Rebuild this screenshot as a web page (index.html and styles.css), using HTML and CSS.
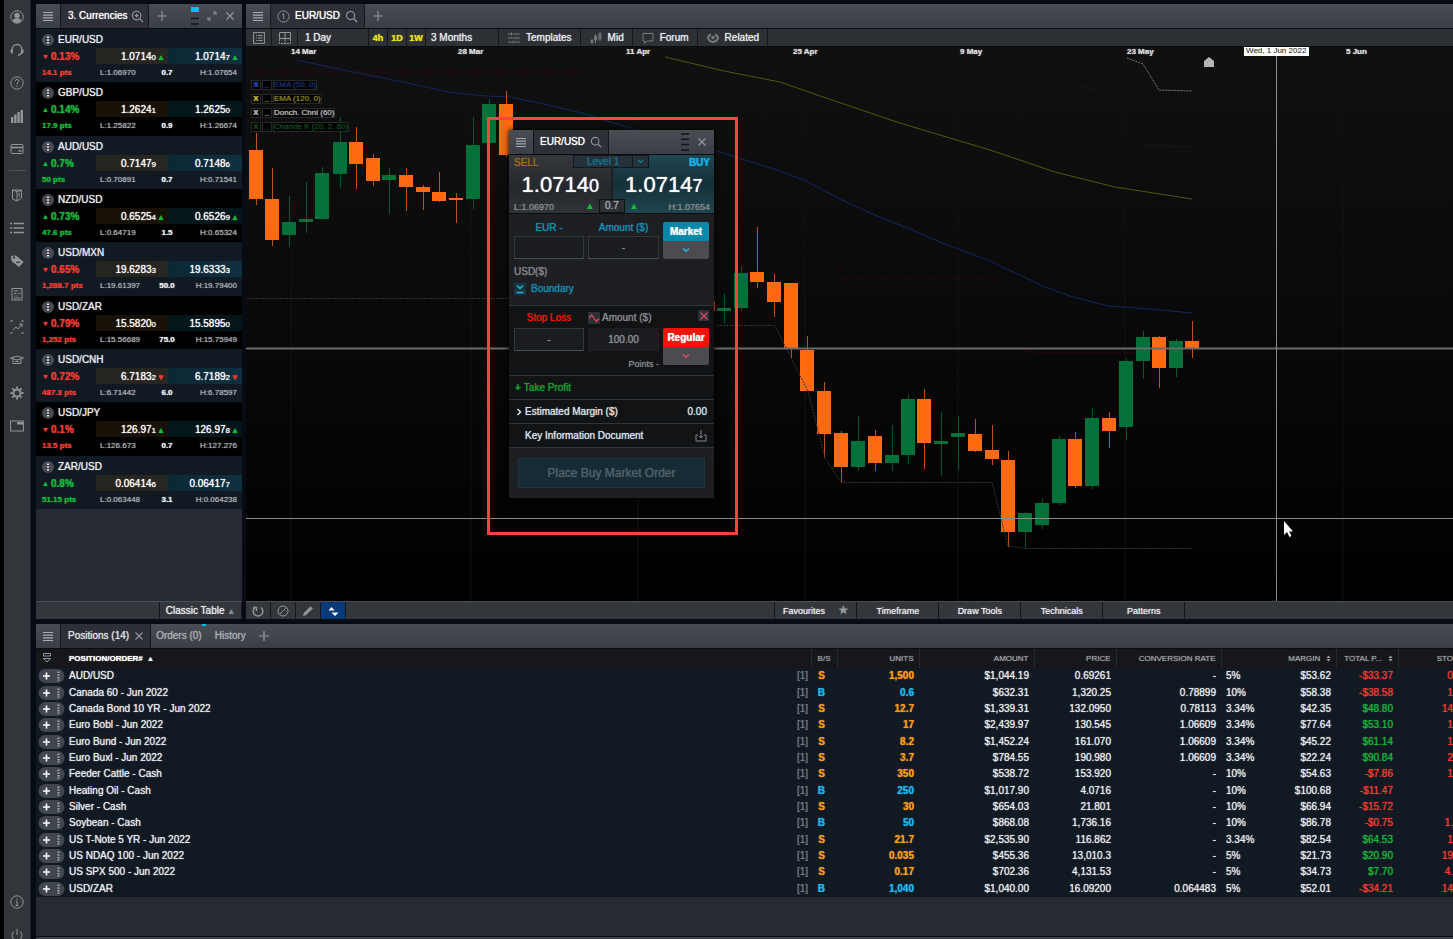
FILE: index.html
```html
<!DOCTYPE html>
<html lang="en">
<head>
  <meta charset="UTF-8" />
  <meta name="viewport" content="width=device-width, initial-scale=1" />
  <title>Trading platform</title>
  <link rel="stylesheet" href="styles.css">
</head>
<body>
  <svg class="defs" aria-hidden="true">
    <symbol id="i-menu" viewBox="0 0 10 10"><path d="M0 1.5h10M0 4.2h10M0 6.9h10M0 9.5h10" stroke="currentColor" stroke-width="1.2"/></symbol>
    <symbol id="i-plus" viewBox="0 0 10 10"><path d="M5 0v10M0 5h10" stroke="currentColor" stroke-width="1.2"/></symbol>
    <symbol id="i-close" viewBox="0 0 10 10"><path d="M1.5 1.5l7 7M8.5 1.5l-7 7" stroke="currentColor" stroke-width="1.2"/></symbol>
    <symbol id="i-search" viewBox="0 0 14 14"><circle cx="6" cy="6" r="4.4" fill="none" stroke="currentColor" stroke-width="1.2"/><path d="M9.2 9.2l3.8 3.8" stroke="currentColor" stroke-width="1.5"/></symbol>
    <symbol id="i-searchplus" viewBox="0 0 14 14"><circle cx="6" cy="6" r="4.6" fill="none" stroke="currentColor" stroke-width="1.2"/><path d="M9.2 9.2l3.8 3.8M6 3.8v4.4M3.8 6h4.4" stroke="currentColor" stroke-width="1.3"/></symbol>
    <symbol id="i-chev" viewBox="0 0 8 6"><path d="M1 1.5l3 2.6 3-2.6" fill="none" stroke="currentColor" stroke-width="1.6"/></symbol>
    <symbol id="i-dots" viewBox="0 0 12 12"><circle cx="6" cy="6" r="6" fill="#484c52"/><path d="M5 2.5h2v1.6H5zM5 5.2h2v1.6H5zM5 7.9h2v1.6H5z" fill="#d8dadc"/></symbol>
    <symbol id="i-pill" viewBox="0 0 26 14"><rect width="26" height="14" rx="7" fill="#41464e"/><path d="M8 3.5v7M4.5 7h7" stroke="#fff" stroke-width="1.6"/><path d="M19 2.5h2v1.6h-2zM19 5.2h2v1.6h-2zM19 7.9h2v1.6h-2zM19 10.4h2v1.4h-2z" fill="#a9adb3"/></symbol>
    <symbol id="i-sort" viewBox="0 0 6 8"><path d="M.5 3.5L3 .5l2.5 3zM.5 4.5h5L3 7.5z" fill="currentColor"/></symbol>
  </svg>

  <nav class="sidebar" aria-label="Main">
    <button aria-label="Account"><svg viewBox="0 0 14 14"><circle cx="7" cy="7" r="6.2" class="ln"/><circle cx="7" cy="5.4" r="2.7" class="fl"/><path class="fl" d="M2.5 10.5q1-2 3-2.3h3q2 .3 3 2.3Q9.8 13 7 13t-4.5-2.5z"/></svg></button>
    <button aria-label="Support"><svg viewBox="0 0 14 14"><path class="ln" stroke-width="1.4" d="M2.2 7.5V6.3a4.8 4.8 0 0 1 9.6 0v1.2q0 4-3.8 4.7"/><path class="fl" d="M.5 6.5h2.3v4H1.5L.5 9.5zM11.2 6.5h2.3v3l-1 1h-1.3z"/></svg></button>
    <button aria-label="Help"><svg viewBox="0 0 14 14"><circle cx="7" cy="7" r="6.2" class="ln"/><path class="ln" d="M5 5.3q.2-1.8 2-1.8t2 1.6Q9 6.2 7 7.2v1.3M7 9.7v1.2"/></svg></button>
    <button aria-label="Statistics"><svg viewBox="0 0 14 14"><path class="fl" d="M1 8h2.4v6H1zM4.2 5.5h2.4V14H4.200zM7.400 3h2.400v11H7.400zM10.600 1H13v13h-2.400z"/></svg></button>
    <button aria-label="Payments"><svg viewBox="0 0 14 14"><rect x="1" y="2.5" width="12" height="9" rx="1" class="ln"/><path class="ln" stroke-width="1.4" d="M1 5.500h12M8.500 9h3"/></svg></button>
    <hr>
    <button aria-label="Products"><svg viewBox="0 0 14 14"><path class="ln" d="M2.5 2l4.500 1.500V13L2.500 11zM2.500 2h9v8L7 13M7 3.500l4.500-1M9.200 5v4"/></svg></button>
    <button aria-label="Watchlists"><svg viewBox="0 0 14 14"><path class="ln" stroke-width="1.3" d="M0 2.500h2M3.500 2.500H14M0 7h2M3.500 7H14M0 11.500h2M3.500 11.500H14"/></svg></button>
    <button aria-label="Offers"><svg viewBox="0 0 14 14"><path class="fl" fill-rule="evenodd" d="M1 2l5-.5 7.500 6.500-4.500 5L1.500 7zM3 3a1 1 0 1 0 2 1 1 1 0 1 0-2-1zM6.500 7l1 1 2.700-.5-.4 1.200-2.600.6-1.200-1.200z"/></svg></button>
    <button aria-label="News"><svg viewBox="0 0 14 14"><rect x="2" y="1.5" width="10" height="11.5" class="ln"/><path class="ln" d="M4 4h4M9.500 4h1M4 6.500h2.500M8 6.500h2.500M4 9h1M6.500 9h1.500M4 11h6.500"/></svg></button>
    <button aria-label="Analysis"><svg viewBox="0 0 14 14"><path class="ln" d="M3 10l3-3 2 2 4-5M9 4h3v3"/><path class="ln" stroke-dasharray="3 8" d="M0 1h14M0 13h14"/></svg></button>
    <button aria-label="Education"><svg viewBox="0 0 14 14"><path class="ln" d="M.5 5L7 3l6.500 2L7 7zM3 6v4.500h8V6M5 8.500h4"/></svg></button>
    <button aria-label="Settings"><svg viewBox="0 0 14 14"><circle cx="7" cy="7" r="3.6" class="ln" stroke-width="2"/><path class="ln" stroke-width="2" d="M7 .5v2M7 11.500v2M.5 7h2M11.500 7h2M2.400 2.400l1.400 1.400M10.200 10.200l1.400 1.400M11.600 2.400l-1.400 1.400M3.800 10.200l-1.400 1.400"/></svg></button>
    <button aria-label="Layouts"><svg viewBox="0 0 14 14"><rect x=".6" y="2" width="12.800" height="10" class="ln"/><path class="fl" d="M7 3h6v2.500H7z"/></svg></button>
    <span class="spacer"></span>
    <button aria-label="Information"><svg viewBox="0 0 14 14"><circle cx="7" cy="7" r="6.2" class="ln"/><path class="ln" d="M7 3.500V5M5.800 6.500H7v4M5.500 10.500h3"/></svg></button>
    <button aria-label="Log out"><svg viewBox="0 0 14 14"><path class="ln" d="M4 3.500a5 5 0 1 0 6 0M7 1v6"/></svg></button>
  </nav>

  <main class="workspace">
    <div class="top-row">
      <section class="watchlist" aria-label="Currencies">
        <header class="bar">
          <button class="menu" aria-label="Menu"><svg><use href="#i-menu"/></svg></button>
          <div class="tab">3. Currencies <svg class="big"><use href="#i-searchplus"/></svg></div>
          <button class="add" aria-label="Add tab"><svg><use href="#i-plus"/></svg></button>
          <div class="window-tools">
            <svg class="stack" viewBox="0 0 8 18"><path d="M0 0h8v5H0z" fill="#00bfff"/><path d="M0 11.500h8M0 17h8" stroke="#111418" stroke-width="1.500"/></svg>
            <button aria-label="Expand"><svg viewBox="0 0 10 10"><path class="ln" d="M6 4l3-3M6 1h3v3M4 6L1 9M1 6v3h3"/></svg></button>
            <button aria-label="Close"><svg><use href="#i-close"/></svg></button>
          </div>
        </header>
        <div class="quotes" id="quotes"></div>
        <footer class="foot"><button class="classic">Classic Table <span>▲</span></button></footer>
      </section>

      <section class="chart" aria-label="EUR/USD chart">
        <header class="bar">
          <button class="menu" aria-label="Menu"><svg><use href="#i-menu"/></svg></button>
          <div class="tab"><svg class="big" viewBox="0 0 14 14"><circle cx="7" cy="7" r="6" class="ln"/><path class="ln" d="M5.500 5L7.200 4v6"/></svg> EUR/USD <svg class="big"><use href="#i-search"/></svg></div>
          <button class="add" aria-label="Add tab"><svg><use href="#i-plus"/></svg></button>
        </header>
        <div class="toolbar">
          <button class="sq" aria-label="Chart list"><svg viewBox="0 0 12 12"><rect x=".6" y=".6" width="10.800" height="10.800" class="ln"/><path class="ln" d="M3 3.500h1M5 3.500h4.500M3 6h1M5 6h4.500M3 8.500h1M5 8.500h4.500"/></svg></button>
          <button class="sq" aria-label="Grid"><svg viewBox="0 0 12 12"><path class="ln" d="M1 .5h10.500v6H.5v-6M6 .5v6"/><path class="ln" stroke-dasharray="2 1" d="M.5 7v4.500h11V7M6 7v4"/></svg></button>
          <button class="interval">1 Day</button>
          <button class="fav">4h</button>
          <button class="fav">1D</button>
          <button class="fav">1W</button>
          <button class="range">3 Months</button>
          <button class="tool"><svg viewBox="0 0 12 12"><path class="ln" d="M0 2h3M4.500 2H12M0 6h7M9 6h3M0 10h4M6 10h6M3.500 .5v3M8 4.500v3M5 8.500v3"/></svg>Templates</button>
          <button class="tool"><svg viewBox="0 0 12 12"><path class="ln" d="M2 7v5M1 8.500h2v2H1zM5.500 2v9M4.700 4h2v4h-2zM10 0v9M9 2h2v5H9z"/></svg>Mid</button>
          <button class="tool"><svg viewBox="0 0 12 12"><path class="ln" d="M1 1.500h10V9H5l-2.500 2.500V9H1z"/></svg>Forum</button>
          <button class="tool"><svg viewBox="0 0 12 12"><path class="ln" stroke-width="2" d="M4 2.500Q1 4 1 6q1 3.500 5 4 4-.5 5-4 0-2-3-3.500"/><circle cx="6" cy="5.500" r="1.800" class="fl"/></svg>Related</button>
        </div>

        <div class="plot">
          <svg class="plot-svg" viewBox="246 47 1207 554" preserveAspectRatio="xMinYMin slice" role="img" aria-label="Daily candles">
            <g stroke="#131313"><path d="M291 60V601M471 60V601M638 60V601M805 60V601M958 60V601M1125 60V601M1343 60V601"/></g>
            <g class="dates">
              <text x="291" y="54">14 Mar</text>
              <text x="458" y="54">28 Mar</text>
              <text x="626" y="54">11 Apr</text>
              <text x="793" y="54">25 Apr</text>
              <text x="960" y="54">9 May</text>
              <text x="1127" y="54">23 May</text>
              <text x="1346" y="54">5 Jun</text>
            </g>
            <g fill="none">
              <path stroke="#3a0a0a" stroke-dasharray="2 1" d="M250 72H590M835 261l6 17H1000M1022 349l18 4H1192"/>
              <path stroke="#0c2a10" stroke-dasharray="2 2" d="M1055 77l20 8 20 5 7 20M1140 145l52 2"/>
              <path stroke="#15265f" d="M297 60L338 69 383 78 417 85 448 92 486 96 510 97 548 105 582 113 627 127 714 150 780 171 806 181 842 200 875 215 910 229 942 243 990 261 1045 287 1070 296 1108 306 1150 309 1192 313"/>
              <path stroke="#55550c" d="M665 57L724 71 780 82 823 97 900 123 990 150 1055 172 1115 187 1192 199"/>
              <path stroke="#777" stroke-dasharray="2 1" d="M1127 58L1143 64 1159 90 1192 91"/>
            </g>
            <g id="candles"></g>
            <path class="channel" d="M247 298.500H509M717 325.500H775L791 358 808 391 825 458 841 482.500H992L1008 546 1025 548.500H1192"/>
            <path d="M1204 67v-6l5-4 5 4v6z" fill="#b5b5b5"/>
            <path d="M246 348.500H1453" stroke="#6a6a6a" stroke-width="2"/>
            <path d="M246 518.500H1453M1276.500 56V601" stroke="#8a8a8a"/>
            <rect x="1244" y="47" width="65" height="9" fill="#fff"/>
            <text x="1246" y="53" class="cross-date">Wed, 1 Jun 2022</text>
            <path d="M1284 521v14l3-3 2.500 5 2-1-2.300-4.500h3.800z" fill="#fff"/>
          </svg>

          <ul class="legend">
            <li class="blue"><b>X</b><b>_</b><span>EMA (50, 0)</span></li>
            <li class="yellow"><b>X</b><b>_</b><span>EMA (120, 0)</span></li>
            <li class="white"><b>X</b><b>_</b><span>Donch. Chnl (60)</span></li>
            <li class="green"><b>X</b><b>_</b><span>Chande K (20, 2, 60)</span></li>
          </ul>

          <div class="highlight">
            <form class="ticket" aria-label="Order ticket">
              <header class="bar">
                <button type="button" class="menu" aria-label="Menu"><svg><use href="#i-menu"/></svg></button>
                <div class="tab">EUR/USD <svg class="big"><use href="#i-search"/></svg></div>
                <div class="window-tools">
                  <svg class="stack" viewBox="0 0 8 18"><path d="M0 1h8M0 6.300h8M0 11.600h8M0 17h8" stroke="#111418" stroke-width="1.500"/></svg>
                  <button type="button" aria-label="Close"><svg><use href="#i-close"/></svg></button>
                </div>
              </header>
              <div class="prices">
                <button type="button" class="side sell"><span class="dir">SELL</span><span class="quote">1.0714<small>0</small></span><span class="hl">L:1.06970</span></button>
                <button type="button" class="side buy"><span class="dir">BUY</span><span class="quote">1.0714<small>7</small></span><span class="hl">H:1.07654</span></button>
                <label class="level"><select aria-label="Level"><option>Level 1</option></select><svg><use href="#i-chev"/></svg></label>
                <div class="spread"><i>▲</i><span>0.7</span><i>▲</i></div>
              </div>
              <div class="fields entry">
                <label for="eur">EUR -</label>
                <label for="amount">Amount ($)</label>
                <button type="button" class="type">Market</button>
                <input id="eur" type="text">
                <input id="amount" type="text" value="-">
                <button type="button" class="drop" aria-label="Order type"><svg><use href="#i-chev"/></svg></button>
                <span class="ccy">USD($)</span>
                <button type="button" class="boundary"><svg viewBox="0 0 12 12"><rect width="12" height="12" rx="1" fill="#183640"/><path d="M3 2.500l3 3 3-3M2.500 9.500h7" fill="none" stroke="#23b5dc" stroke-width="1.500"/></svg>Boundary</button>
              </div>
              <div class="fields stop">
                <label for="stop">Stop Loss</label>
                <label for="risk" class="risk"><svg viewBox="0 0 12 12"><rect width="12" height="12" fill="#2d3035"/><path d="M1 6l2.500-3L6 6M6 6.500l2.500 3L11 6.500" fill="none" stroke="#d04a60" stroke-width="1.300"/></svg>Amount ($)</label>
                <button type="button" class="remove" aria-label="Remove stop loss"><svg><use href="#i-close"/></svg></button>
                <input id="stop" type="text" value="-">
                <input id="risk" class="plain" type="text" value="100.00">
                <button type="button" class="type">Regular</button>
                <button type="button" class="drop" aria-label="Stop type"><svg><use href="#i-chev"/></svg></button>
                <span class="points">Points -</span>
              </div>
              <button type="button" class="line profit"><b>+</b>Take Profit</button>
              <button type="button" class="line"><svg viewBox="0 0 6 8"><path d="M1.500 1l3 3-3 3" fill="none" stroke="currentColor" stroke-width="1.500"/></svg>Estimated Margin ($)<span class="end">0.00</span></button>
              <a class="line kid" href="#">Key Information Document<svg class="end" viewBox="0 0 12 12"><path class="ln" d="M3 5H1v6h10V5H9M6 0v8M3.800 5.800L6 8l2.200-2.200"/></svg></a>
              <div class="submit"><button type="submit" disabled>Place Buy Market Order</button></div>
            </form>
          </div>
        </div>

        <footer class="foot">
          <button class="sq" aria-label="Reset"><svg viewBox="0 0 12 12"><path class="ln" stroke-width="1.500" d="M3 2.500a4.800 4.800 0 1 0 6 0M1 2.500h3.500V6"/></svg></button>
          <button class="sq" aria-label="Clear"><svg viewBox="0 0 12 12"><circle cx="6" cy="6" r="5" class="ln"/><path class="ln" d="M2.500 9.500l7-7"/></svg></button>
          <button class="sq" aria-label="Draw"><svg viewBox="0 0 12 12"><path class="fl" d="M1 11l.8-3L8.500 1.200l2.300 2.300L4 10.200z"/></svg></button>
          <button class="sq on" aria-label="Fit"><svg viewBox="0 0 12 12"><path d="M1.500 5.500L4.500 2l3 3.500zM4.500 7.500h7L8 11z" fill="#fff"/></svg></button>
          <div class="chart-tabs">
            <button>Favourites <span>★</span></button>
            <button>Timeframe</button>
            <button>Draw Tools</button>
            <button>Technicals</button>
            <button>Patterns</button>
          </div>
        </footer>
      </section>
    </div>

    <section class="positions" aria-label="Positions">
      <header class="bar">
        <button class="menu" aria-label="Menu"><svg><use href="#i-menu"/></svg></button>
        <div class="tab">Positions (14) <svg><use href="#i-close"/></svg></div>
        <button class="link dot">Orders (0)</button>
        <button class="link">History</button>
        <button class="add" aria-label="Add tab"><svg><use href="#i-plus"/></svg></button>
      </header>
      <table>
        <colgroup><col><col class="c-bs"><col class="c-md"><col class="c-lg"><col class="c-md"><col class="c-rate"><col class="c-lg"><col class="c-pl"><col class="c-stop"></colgroup>
        <thead>
          <tr>
            <th class="name"><svg viewBox="0 0 8 10"><path class="ln" d="M.5 .5h7V3h-7zM.5 5.500L4 9l3.500-3.500z"/></svg>POSITION/ORDER# <small>▲</small></th>
            <th class="bs">B/S</th><th>UNITS</th><th>AMOUNT</th><th>PRICE</th><th>CONVERSION RATE</th>
            <th>MARGIN <svg class="sort"><use href="#i-sort"/></svg></th><th>TOTAL P... <svg class="sort"><use href="#i-sort"/></svg></th><th class="cut">STO</th>
          </tr>
        </thead>
        <tbody id="rows"></tbody>
      </table>
    </section>
    <div class="next-panel"></div>
  </main>

  <script>
    // name, direction, change, points, sell, digit, buy, digit, low, spread, high, sell tick, buy tick
    const quotes = [
      ['EUR/USD', 'down', '0.13%', '14.1', '1.0714', '0', '1.0714', '7', '1.06970', '0.7', '1.07654', 'up', 'up'],
      ['GBP/USD', 'up', '0.14%', '17.9', '1.2624', '1', '1.2625', '0', '1.25822', '0.9', '1.26674', '', ''],
      ['AUD/USD', 'up', '0.7%', '50', '0.7147', '9', '0.7148', '6', '0.70891', '0.7', '0.71541', '', ''],
      ['NZD/USD', 'up', '0.73%', '47.6', '0.6525', '4', '0.6526', '9', '0.64719', '1.5', '0.65324', 'up', 'up'],
      ['USD/MXN', 'down', '0.65%', '1,288.7', '19.6283', '3', '19.6333', '3', '19.61397', '50.0', '19.79400', '', ''],
      ['USD/ZAR', 'down', '0.79%', '1,252', '15.5820', '0', '15.5895', '0', '15.56689', '75.0', '15.75949', '', ''],
      ['USD/CNH', 'down', '0.72%', '487.3', '6.7183', '2', '6.7189', '2', '6.71442', '6.0', '6.78597', 'down', 'down'],
      ['USD/JPY', 'down', '0.1%', '13.5', '126.97', '1', '126.97', '8', '126.673', '0.7', '127.276', 'up', 'up'],
      ['ZAR/USD', 'up', '0.8%', '51.15', '0.06414', '6', '0.06417', '7', '0.063448', '3.1', '0.064238', '', '']
    ];
    const arrow = dir => dir ? `<i class="${dir}">${dir === 'up' ? '▲' : '▼'}</i>` : '<i></i>';

    document.getElementById('quotes').innerHTML = quotes.map(q => `
      <article class="quote-row">
        <h3><svg><use href="#i-dots"/></svg>${q[0]}</h3>
        <span class="change ${q[1]}">${arrow(q[1])}${q[2]}</span>
        <span class="px sell">${q[4]}<small>${q[5]}</small>${arrow(q[11])}</span>
        <span class="px buy">${q[6]}<small>${q[7]}</small>${arrow(q[12])}</span>
        <span class="pts ${q[1]}">${q[3]} pts</span>
        <span class="low">L:${q[8]}</span><span class="mid">${q[9]}</span><span class="high">H:${q[10]}</span>
      </article>`).join('');

    const positions = [
      ['AUD/USD', 'S', '1,500', '$1,044.19', '0.69261', '-', '5%', '$53.62', '-$33.37', '0'],
      ['Canada 60 - Jun 2022', 'B', '0.6', '$632.31', '1,320.25', '0.78899', '10%', '$58.38', '-$38.58', '1'],
      ['Canada Bond 10 YR - Jun 2022', 'S', '12.7', '$1,339.31', '132.0950', '0.78113', '3.34%', '$42.35', '$48.80', '14'],
      ['Euro Bobl - Jun 2022', 'S', '17', '$2,439.97', '130.545', '1.06609', '3.34%', '$77.64', '$53.10', '1'],
      ['Euro Bund - Jun 2022', 'S', '8.2', '$1,452.24', '161.070', '1.06609', '3.34%', '$45.22', '$61.14', '1'],
      ['Euro Buxl - Jun 2022', 'S', '3.7', '$784.55', '190.980', '1.06609', '3.34%', '$22.24', '$90.84', '2'],
      ['Feeder Cattle - Cash', 'S', '350', '$538.72', '153.920', '-', '10%', '$54.63', '-$7.86', '1'],
      ['Heating Oil - Cash', 'B', '250', '$1,017.90', '4.0716', '-', '10%', '$100.68', '-$11.47', ''],
      ['Silver - Cash', 'S', '30', '$654.03', '21.801', '-', '10%', '$66.94', '-$15.72', ''],
      ['Soybean - Cash', 'B', '50', '$868.08', '1,736.16', '-', '10%', '$86.78', '-$0.75', '1.'],
      ['US T-Note 5 YR - Jun 2022', 'S', '21.7', '$2,535.90', '116.862', '-', '3.34%', '$82.54', '$64.53', '1'],
      ['US NDAQ 100 - Jun 2022', 'S', '0.035', '$455.36', '13,010.3', '-', '5%', '$21.73', '$20.90', '19'],
      ['US SPX 500 - Jun 2022', 'S', '0.17', '$702.36', '4,131.53', '-', '5%', '$34.73', '$7.70', '4.'],
      ['USD/ZAR', 'B', '1,040', '$1,040.00', '16.09200', '0.064483', '5%', '$52.01', '-$34.21', '14']
    ];
    document.getElementById('rows').innerHTML = positions.map(p => `
      <tr class="${p[1] === 'B' ? 'is-buy' : 'is-sell'}">
        <td class="name"><div><svg><use href="#i-pill"/></svg>${p[0]}<span>[1]</span></div></td>
        <td class="bs">${p[1]}</td><td class="units">${p[2]}</td><td>${p[3]}</td><td>${p[4]}</td><td>${p[5]}</td>
        <td><div class="margin"><span>${p[6]}</span>${p[7]}</div></td>
        <td class="${p[8][0] === '-' ? 'down' : 'up'}">${p[8]}</td><td class="cut down">${p[9]}</td>
      </tr>`).join('');

    // centre x, high, body top, body bottom, low, rising
    const candles = [
      [256, 133, 150, 199, 205, 0], [272, 168, 199, 240, 246, 0], [289, 196, 222, 235, 247, 1],
      [306, 182, 219, 222, 233, 1], [322, 167, 173, 219, 220, 1], [340, 117, 142, 174, 188, 1],
      [356, 127, 142, 164, 189, 0], [373, 154, 158, 181, 186, 0], [389, 168, 175, 180, 214, 1],
      [406, 168, 175, 187, 211, 0], [423, 185, 187, 192, 210, 0], [439, 172, 192, 201, 202, 0],
      [456, 193, 198, 200, 223, 0], [473, 117, 145, 199, 209, 1], [489, 99, 104, 143, 143, 1],
      [506, 91, 104, 155, 157, 0], [708, 296, 301, 311, 316, 0], [724, 294, 308, 311, 323, 1],
      [741, 266, 273, 308, 311, 1], [757, 227, 272, 282, 288, 0], [774, 274, 282, 302, 317, 0],
      [791, 283, 283, 348, 358, 0], [807, 336, 350, 391, 391, 0], [824, 382, 391, 434, 458, 0],
      [841, 431, 433, 467, 482, 0], [858, 416, 441, 467, 471, 1], [875, 430, 436, 463, 471, 0],
      [892, 425, 455, 463, 471, 1], [908, 395, 399, 455, 464, 1], [924, 389, 399, 443, 469, 0],
      [941, 412, 441, 444, 476, 1], [958, 416, 433, 437, 470, 1], [975, 419, 434, 451, 452, 0],
      [992, 425, 450, 459, 465, 0], [1008, 451, 460, 532, 547, 0], [1025, 512, 513, 532, 549, 1],
      [1042, 499, 503, 525, 529, 1], [1059, 436, 439, 503, 505, 1], [1075, 432, 439, 486, 488, 0],
      [1092, 408, 418, 486, 489, 1], [1109, 412, 418, 431, 448, 0], [1126, 358, 361, 427, 440, 1],
      [1143, 331, 337, 361, 379, 1], [1159, 336, 337, 368, 388, 0], [1176, 339, 341, 368, 377, 1],
      [1192, 321, 341, 349, 358, 0]
    ];
    document.getElementById('candles').innerHTML = candles.map(([x, hi, top, bottom, lo, rise]) => `
      <g class="${rise ? 'rise' : 'fall'}">
        <rect class="wick" x="${x}" y="${hi}" width="1" height="${lo - hi}"/>
        <rect x="${x - 7}" y="${top}" width="14" height="${bottom - top}"/>
      </g>`).join('');
  </script>
</body>
</html>
```

FILE: styles.css
```css
* {
  box-sizing: border-box;
}

body {
  display: flex;
  height: 100vh;
  margin: 0;
  border-left: 4px solid #000;
  overflow: hidden;
  background: #060b14;
  color: #e8eaec;
  font-family: "Liberation Sans", Arial, sans-serif;
  font-size: 10px;
  line-height: 12px;
  text-shadow: 0 0 1px currentColor;
}

button,
input,
select {
  margin: 0;
  padding: 0;
  border: 0;
  background: none;
  color: inherit;
  font: inherit;
  text-shadow: inherit;
}

svg {
  display: block;
  flex: none;
  width: 10px;
  height: 10px;
}

i {
  font-style: normal;
}

.defs {
  position: absolute;
  width: 0;
  height: 0;
}

.ln {
  fill: none;
  stroke: currentColor;
}

.fl {
  fill: currentColor;
}

.up {
  color: #14b83a;
}

.down {
  color: #f23c30;
}

.spacer {
  flex: 1;
}

/* sidebar */
.sidebar {
  display: flex;
  flex: none;
  flex-direction: column;
  width: 27px;
  margin-bottom: -12px;
  border-right: 1px solid #1d2127;
  background: #32353a;
  color: #92969b;
}

.sidebar button {
  display: flex;
  flex: none;
  align-items: center;
  justify-content: center;
  height: 33px;
}

.sidebar svg {
  width: 14px;
  height: 14px;
}

.sidebar hr {
  width: 17px;
  margin: 5px auto 7px;
  border: 0;
  border-top: 1px solid #50545a;
}

/* shared panel parts */
.workspace {
  display: flex;
  flex: 1;
  flex-direction: column;
  min-width: 0;
  padding: 4px 0 0 5px;
}

.top-row {
  display: flex;
  flex: 1;
  gap: 4px;
  min-height: 0;
}

.bar {
  display: flex;
  align-items: stretch;
  height: 25px;
  border-bottom: 1px solid #0a0c10;
  background: linear-gradient(#484c53, #3a3e45);
}

.bar button {
  display: flex;
  align-items: center;
  justify-content: center;
  color: #92969b;
}

.bar .menu {
  width: 25px;
  border-right: 1px solid #14171b;
  color: #a6a9ad;
}

.bar .tab {
  display: flex;
  align-items: center;
  gap: 4px;
  padding: 0 6px;
  border-right: 1px solid #14171b;
  background: #2d3036;
  color: #fff;
}

.bar .tab svg {
  color: #92969b;
}

.bar .big {
  width: 13px;
  height: 13px;
}

.bar .add {
  width: 25px;
}

.window-tools {
  display: flex;
  align-items: center;
  gap: 8px;
  margin-left: auto;
  padding-right: 7px;
}

.window-tools .stack {
  width: 8px;
  height: 18px;
}

.foot {
  display: flex;
  height: 18px;
  border-top: 1px solid #4b4f55;
  background: #33363b;
}

.foot button {
  border-right: 1px solid #14171b;
}

/* watchlist */
.watchlist {
  display: flex;
  flex: none;
  flex-direction: column;
  width: 206px;
  background: #262b33;
}

.quotes {
  display: grid;
  grid-auto-rows: 1fr;
  height: 480px;
}

.watchlist .foot {
  justify-content: flex-end;
  margin-top: auto;
}

.watchlist .tab {
  padding: 0 4px 0 7px;
}

.classic {
  width: 83px;
  border-left: 1px solid #14171b;
}

.foot .classic {
  padding-top: 2px;
}

.classic span {
  color: #858a90;
  font-size: 8px;
}

.quote-row {
  display: grid;
  grid-template-columns: 60px 44px 28px 26px 1fr;
  grid-template-rows: 19px 16px 1fr;
  align-items: center;
  background: #111923;
}

.quote-row:nth-child(even) {
  background: #000;
}

.quote-row h3 {
  display: flex;
  grid-column: 1 / -1;
  align-items: center;
  gap: 4px;
  margin: 0;
  padding: 3px 0 0 6px;
  font-size: 10px;
  font-weight: normal;
}

.quote-row h3 svg {
  width: 12px;
  height: 12px;
}

.change {
  display: flex;
  gap: 3px;
  padding: 2px 0 0 6px;
  font-weight: bold;
}

.change i {
  width: 6px;
  font-size: 7px;
  line-height: 11px;
}

.px {
  display: flex;
  align-items: baseline;
  justify-content: flex-end;
  height: 16px;
  padding: 3px 3px 0 0;
  color: #fff;
}

.px small {
  font-size: 8px;
}

.px i {
  width: 9px;
  font-size: 8px;
  text-align: right;
}

.quote-row .px.sell {
  grid-column: 2 / 4;
  background: linear-gradient(90deg, #26241f, #282622);
}

.quote-row .px.buy {
  grid-column: 4 / 6;
  background: linear-gradient(90deg, #0b2834, #0e3040);
}

.quote-row:nth-child(even) .px.sell {
  background: #171107;
}

.quote-row:nth-child(even) .px.buy {
  background: #05161b;
}

.pts,
.low,
.mid,
.high {
  font-size: 8px;
}

.pts {
  grid-column: 1;
  padding-left: 6px;
  font-weight: bold;
  white-space: nowrap;
}

.low {
  grid-column: 2;
  padding-left: 4px;
  color: #a9adb2;
}

.mid {
  grid-column: 3 / 5;
  font-weight: bold;
  text-align: center;
}

.high {
  padding-right: 5px;
  color: #a9adb2;
  text-align: right;
}

/* chart */
.chart {
  display: flex;
  flex: 1;
  flex-direction: column;
  min-width: 0;
}

.chart .bar .tab {
  gap: 5px;
}

.toolbar {
  display: flex;
  height: 18px;
  border-bottom: 1px solid #0a0c10;
  background: #2d3035;
}

.toolbar button {
  border-right: 1px solid #14171b;
  text-align: left;
}

.sq {
  display: flex;
  align-items: center;
  justify-content: center;
  width: 25px;
  color: #92969b;
}

.toolbar .sq {
  width: 26px;
}

.sq svg {
  width: 12px;
  height: 12px;
}

.sq.on {
  background: #063a78;
}

.toolbar .interval {
  width: 71px;
  padding-left: 7px;
}

.toolbar .fav {
  width: 19px;
  color: #e8e21a;
  font-size: 9px;
  font-weight: bold;
  text-align: center;
}

.toolbar .range {
  width: 73px;
  padding-left: 5px;
}

.toolbar .tool {
  display: flex;
  align-items: center;
  gap: 6px;
  padding: 0 8px 0 9px;
}

.tool svg {
  width: 12px;
  height: 12px;
  color: #777b80;
}

.plot {
  position: relative;
  flex: 1;
  min-height: 0;
  overflow: hidden;
  background: linear-gradient(#101010, #0a0a0a 45%, #000);
}

.plot-svg {
  width: 100%;
  height: 100%;
}

.dates {
  fill: #d4d4d4;
  font-size: 8px;
  font-weight: bold;
}

.cross-date {
  fill: #222;
  font-size: 8px;
}

.rise {
  fill: #04713a;
}

.fall {
  fill: #ff6a13;
}

.wick {
  opacity: 0.75;
}

.channel {
  fill: none;
  stroke: #333;
  stroke-dasharray: 2 1;
}

.legend {
  position: absolute;
  top: 33px;
  left: 5px;
  margin: 0;
  padding: 0;
  font-size: 8px;
  line-height: 10px;
  list-style: none;
}

.legend li {
  display: flex;
  gap: 1px;
  margin-bottom: 4px;
}

.legend b,
.legend span {
  height: 10px;
  border: 1px solid #26282a;
  background: #000;
  line-height: 8px;
}

.legend b {
  width: 10px;
  text-align: center;
}

.legend .blue b { color: #1c50c0; }
.legend .blue span { color: #14306e; }
.legend .yellow b { color: #c8c418; }
.legend .yellow span { color: #85821c; }
.legend .white { color: #b9bbbd; }
.legend .green { color: #0e4a1c; }

/* order ticket */
.highlight {
  position: absolute;
  top: 70px;
  left: 241px;
  width: 251px;
  padding: 10px 21px 34px 19px;
  border: 3px solid #fb4340;
}

.ticket {
  background: #1d1f23;
  box-shadow: 0 0 6px #000;
}

.ticket .bar .tab {
  padding: 0 6px;
}

.ticket .bar .tab svg {
  width: 12px;
  height: 12px;
}

.prices {
  position: relative;
  display: grid;
  grid-template-columns: 1fr 1fr;
  gap: 2px;
  height: 59px;
  border-bottom: 1px solid #0c0d0f;
}

.side {
  display: flex;
  flex-direction: column;
  justify-content: space-between;
  padding: 2px 4px 0 5px;
  background: linear-gradient(#34373c, #24272c 60%, #303338);
  text-align: left;
}

.side.buy {
  background: linear-gradient(#1e4651, #163039 50%, #1f4650);
  text-align: right;
}

.side .dir {
  color: #a66a18;
}

.side.buy .dir {
  color: #18b4e4;
  font-weight: bold;
}

.quote {
  color: #fff;
  font-size: 22px;
  line-height: 24px;
  text-align: center;
}

.quote small {
  font-size: 18px;
}

.side .hl {
  color: #85888c;
  font-size: 9px;
}

.level {
  position: absolute;
  top: 0;
  left: 64px;
  display: flex;
  align-items: center;
  width: 76px;
  height: 13px;
  border: 1px solid #14171b;
  background: #26323a;
}

.level select {
  flex: 1;
  height: 11px;
  padding-left: 13px;
  border-right: 1px solid #14171b;
  appearance: none;
  color: #16718c;
}

.level svg {
  width: 7px;
  height: 5px;
  margin: 0 4px;
  color: #16829f;
}

.spread {
  position: absolute;
  bottom: 0;
  left: 76px;
  display: flex;
  gap: 4px;
  align-items: center;
}

.spread i {
  width: 10px;
  color: #14b83a;
  font-size: 9px;
  text-align: center;
}

.spread span {
  padding: 0 5px;
  border: 1px solid #101214;
  background: #2b2e32;
  color: #a3a6aa;
}

.fields {
  display: grid;
  grid-template-columns: 70px 71px 46px;
  column-gap: 4px;
  padding: 0 5px;
  border-bottom: 1px solid #303338;
}

.fields label {
  text-align: center;
}

.fields input {
  width: 100%;
  height: 23px;
  border: 1px solid #34373c;
  border-bottom-color: #4a4d52;
  background: #1a1c1f;
  color: #8c8f93;
  text-align: center;
}

.fields .plain {
  border-color: #1d1f22;
}

.type {
  height: 19px;
  border-radius: 2px 2px 0 0;
  background: #0887ab;
  color: #fff;
  font-weight: bold;
}

.drop {
  display: flex;
  align-items: center;
  align-self: start;
  justify-content: center;
  height: 18px;
  border-radius: 0 0 2px 2px;
  background: #4a4c4f;
  color: #23b5dc;
}

.drop svg {
  width: 8px;
  height: 6px;
}

.entry {
  grid-template-rows: 14px 5px 18px 19px 17px;
  height: 92px;
  padding-top: 8px;
  color: #1590b2;
}

.entry label {
  grid-row: 1;
  line-height: 11px;
}

.entry .type {
  grid-area: 1 / 3 / 3 / 4;
}

.entry input {
  grid-row: 2 / 4;
}

.entry .drop {
  grid-area: 3 / 3 / 4 / 4;
}

.ccy {
  grid-area: 4 / 1 / 5 / 3;
  align-self: end;
  color: #85888c;
}

.boundary {
  display: flex;
  grid-area: 5 / 1 / 6 / 3;
  align-items: end;
  gap: 5px;
}

.boundary svg {
  width: 12px;
  height: 12px;
}

.stop {
  grid-template-rows: 18px 19px 4px 19px;
  height: 70px;
  padding-top: 4px;
  background: #121315;
  color: #85888c;
}

.stop label {
  padding-top: 2px;
  color: #f01808;
}

.stop .risk {
  display: flex;
  gap: 2px;
  color: #85888c;
}

.risk svg {
  width: 12px;
  height: 12px;
}

.remove {
  display: flex;
  align-items: center;
  align-self: start;
  justify-content: center;
  justify-self: end;
  width: 11px;
  height: 11px;
  background: #2d3035;
  color: #e04a60;
}

.stop input {
  grid-row: 2 / 4;
}

.stop .type {
  grid-area: 2 / 3 / 3 / 4;
  background: #ee1408;
}

.stop .drop {
  grid-area: 3 / 3 / 5 / 4;
  color: #e04a60;
}

.points {
  grid-area: 4 / 1 / 5 / 3;
  align-self: end;
  font-size: 9px;
  text-align: right;
}

.line {
  display: flex;
  align-items: center;
  gap: 3px;
  width: 100%;
  height: 24px;
  padding: 0 7px;
  border-bottom: 1px solid #303338;
  background: #121315;
  color: #d7e3ea;
  text-decoration: none;
}

.line svg {
  width: 6px;
  height: 8px;
}

.line.profit {
  padding-left: 6px;
  color: #12a52e;
}

.line.kid {
  padding-left: 16px;
}

.line .end {
  margin-left: auto;
}

.kid .end {
  width: 12px;
  height: 12px;
  color: #85888c;
}

.submit {
  padding: 10px 9px;
}

.submit button {
  display: block;
  width: 100%;
  height: 30px;
  border: 1px solid #1d3641;
  background: #172b35;
  color: #4f6069;
  font-size: 12px;
}

/* chart footer */
.chart-tabs {
  display: flex;
  flex: 1;
}

.chart-tabs::before {
  flex: 8;
  border-right: 1px solid #14171b;
  content: "";
}

.chart-tabs::after {
  flex: 5;
  content: "";
}

.chart-tabs button {
  width: 82px;
  font-size: 9px;
}

.chart-tabs span {
  margin-left: 10px;
  color: #92969b;
  font-size: 12px;
  line-height: 10px;
}

/* positions */
.positions {
  margin-top: 5px;
  padding-bottom: 39px;
  background: #262b33;
}

.positions .tab {
  gap: 5px;
  padding: 0 6px 0 7px;
  color: #dfe1e3;
}

.positions .link {
  margin-left: 5px;
  color: #a9acb0;
}

.positions .link + .link {
  margin-left: 13px;
}

.positions .link + .add {
  margin-left: 6px;
}

.dot::after {
  align-self: flex-start;
  width: 4px;
  height: 2px;
  margin-right: -4px;
  background: #00bfff;
  content: "";
}

table {
  width: 100%;
  height: 248px;
  border-collapse: collapse;
  table-layout: fixed;
  background: #111923;
}

.c-bs { width: 26px; }
.c-md { width: 82px; }
.c-lg { width: 115px; }
.c-rate { width: 105px; }
.c-pl { width: 62px; }
.c-stop { width: 55px; }

th,
td {
  padding: 0 5px 0 0;
  overflow: hidden;
  text-align: right;
  white-space: nowrap;
}

th {
  height: 19px;
  border-right: 1px solid #26292e;
  background: #15171a;
  color: #9a9da1;
  font-size: 8px;
  font-weight: normal;
}

th small {
  margin-left: 2px;
  font-size: 7px;
}

th .sort {
  display: inline-block;
  width: 5px;
  height: 7px;
  margin-left: 3px;
  vertical-align: middle;
}

th.name {
  color: #fff;
  font-weight: bold;
  text-align: left;
}

th.name svg {
  display: inline-block;
  width: 8px;
  height: 10px;
  margin: 0 18px 0 7px;
  color: #92969b;
  vertical-align: middle;
}

td.name {
  padding-right: 3px;
}

td.name div {
  display: flex;
  align-items: center;
  padding-left: 2px;
}

td.name svg {
  width: 27px;
  height: 14px;
  margin-right: 4px;
}

td.name span {
  margin-left: auto;
  color: #73787e;
}

th.bs {
  padding-right: 6px;
}

td.bs,
td.units {
  font-weight: bold;
}

td.bs {
  padding-right: 12px;
}

.is-sell .bs,
.is-sell .units {
  color: #f59a1b;
}

.is-buy .bs,
.is-buy .units {
  color: #1fb4ec;
}

.margin {
  display: flex;
  justify-content: space-between;
  padding-left: 5px;
}

th.cut,
td.cut {
  padding: 0;
  border: 0;
}

.next-panel {
  height: 3px;
  border-top: 1px solid #0a0c10;
  background: #3a3e45;
}
```
